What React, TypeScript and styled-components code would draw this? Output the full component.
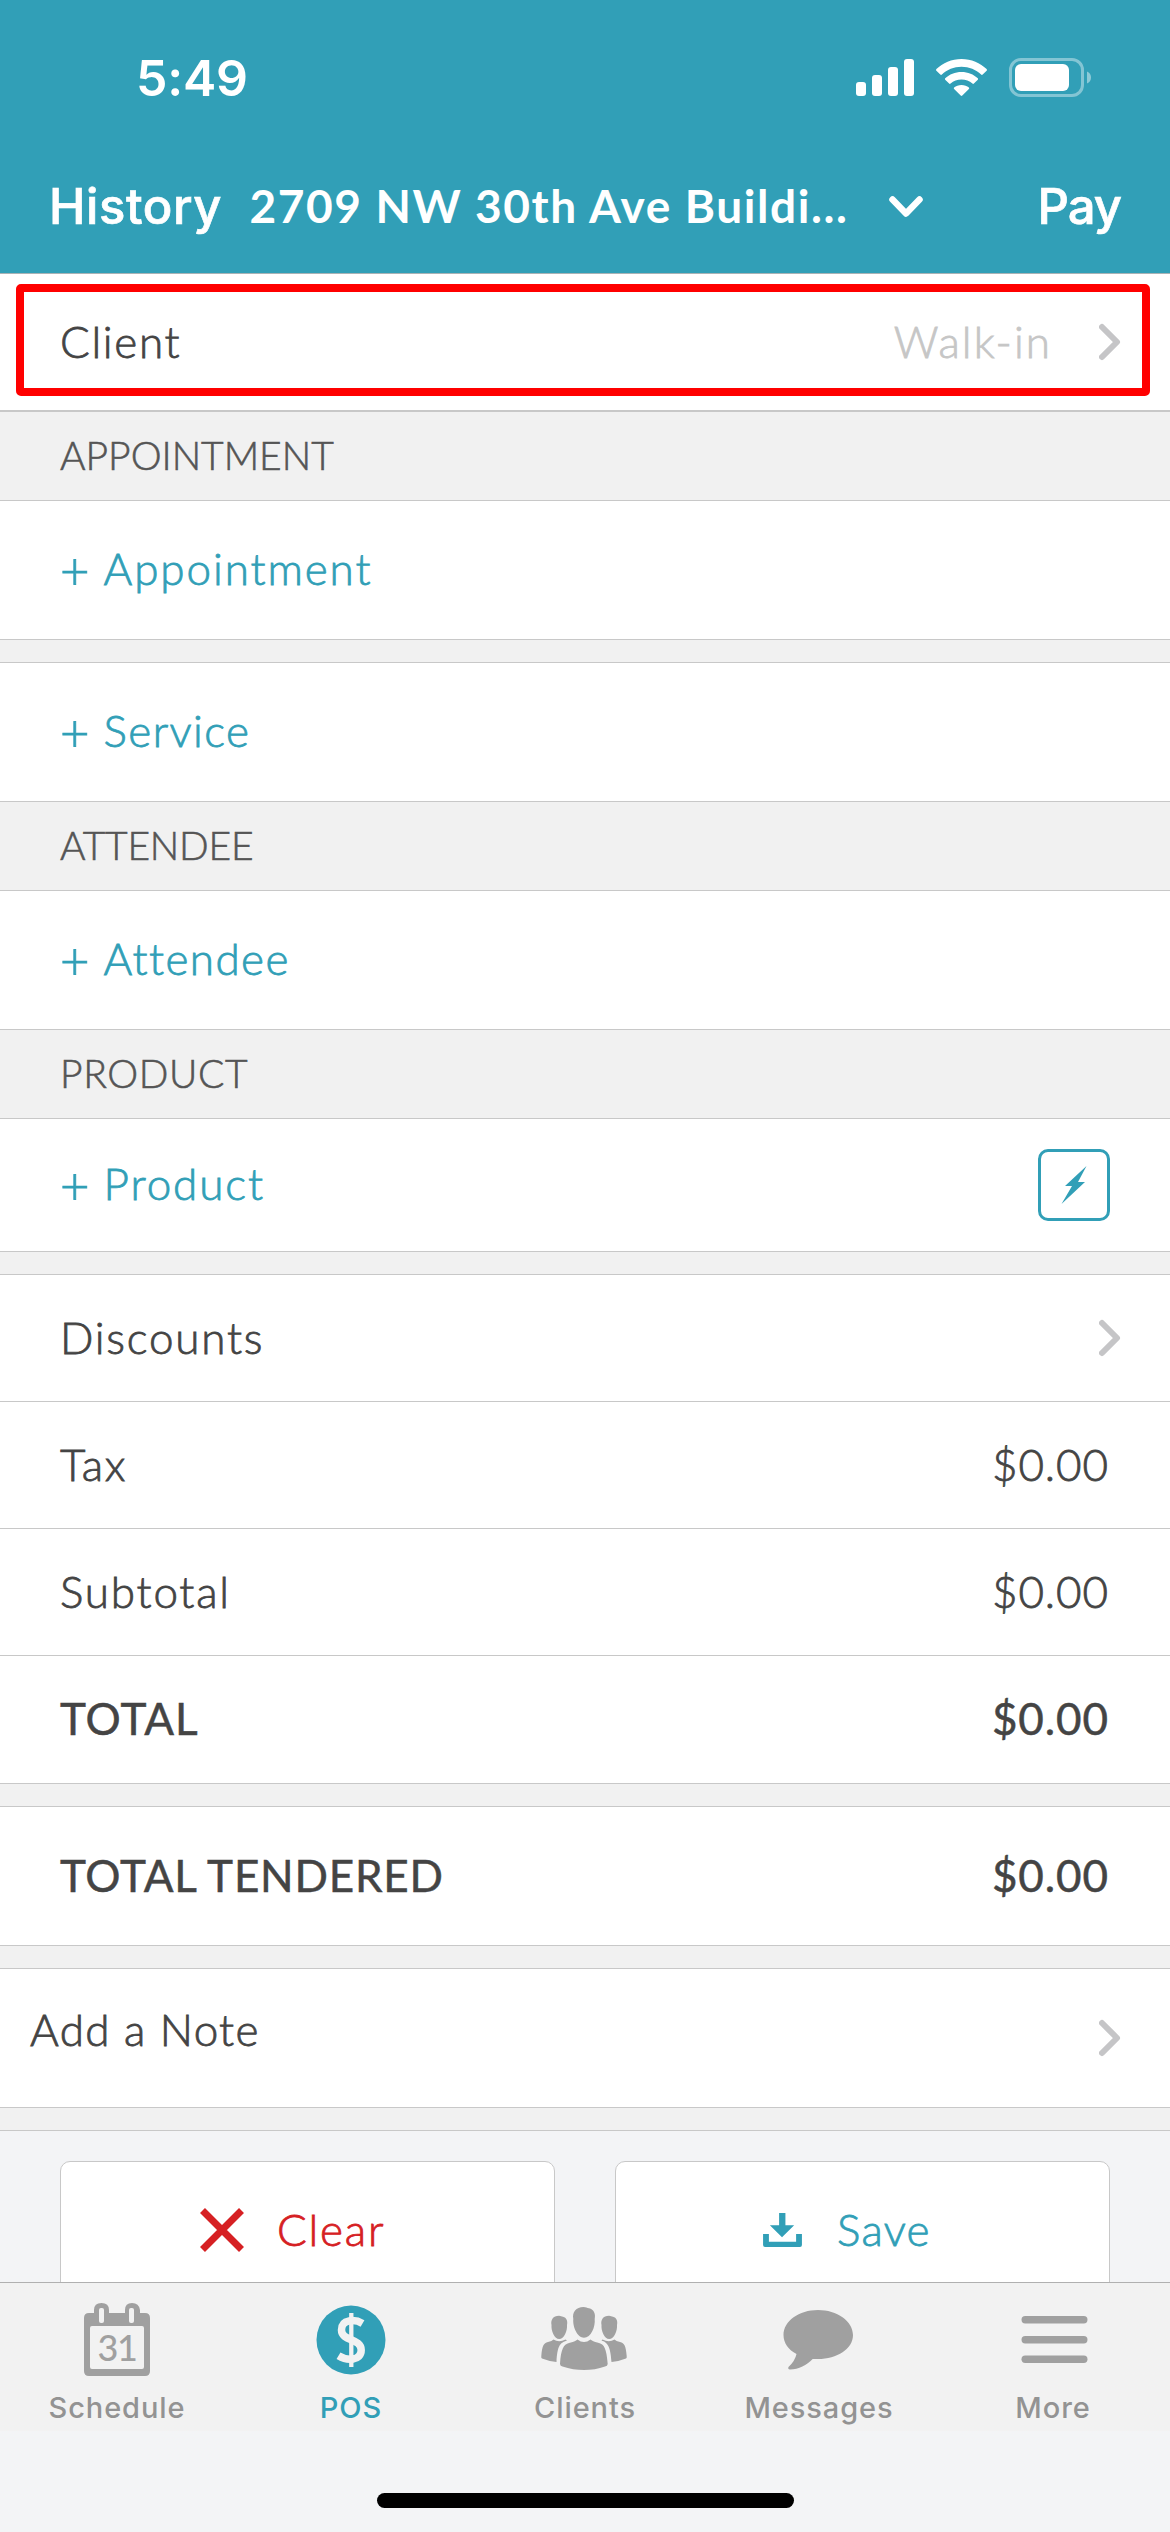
import React from "react";
import styled, { createGlobalStyle } from "styled-components";

const TEAL = "#319fb7";
const INK = "#444";
const LINE = "#c8c8c8";

const GlobalStyle = createGlobalStyle`
  *, *::before, *::after { box-sizing: border-box; }
  html, body { margin: 0; padding: 0; background: #f3f4f6; }
  body { width: 1170px; height: 2532px; overflow: hidden; }
`;

const Screen = styled.div`
  width: 1170px;
  height: 2532px;
  display: flex;
  flex-direction: column;
  background: #f3f4f6;
  font-family: Lato, "Open Sans", sans-serif;
  color: ${INK};
  overflow: hidden;
`;

const Header = styled.header`
  height: 274px;
  flex: none;
  display: flex;
  flex-direction: column;
  background: ${TEAL};
  border-bottom: 1px solid #a9b3b6;
  color: #fff;
`;

const StatusBar = styled.div`
  height: 140px;
  padding: 16px 78px 0 136px;
  display: flex;
  align-items: center;
  justify-content: space-between;
`;

const Clock = styled.span`
  font: 600 50px/60px Inter, sans-serif;
  letter-spacing: -0.2px;
`;

const StatusIcons = styled.div`
  display: flex;
  align-items: center;
  gap: 22px;
`;

const NavBar = styled.div`
  height: 133px;
  padding: 0 48px 0 49px;
  display: flex;
  align-items: center;
`;

const NavButton = styled.span<{ $ls: number }>`
  font: 500 49px/60px Inter, sans-serif;
  letter-spacing: ${(p) => p.$ls}px;
  margin-right: ${(p) => -p.$ls}px;
  -webkit-text-stroke: 0.7px #fff;
`;

const Location = styled.span`
  margin: -1px 0 0 28px;
  font-size: 46px;
  line-height: 60px;
  font-weight: 700;
  letter-spacing: 1.6px;
  white-space: nowrap;
`;

const Caret = styled.svg`
  margin-left: 40px;
  margin-right: auto;
`;

const List = styled.main`
  flex: none;
  display: flex;
  flex-direction: column;
`;

const Row = styled.div<{ $h: number; $line?: number; $left?: number; $right?: number; $up?: number }>`
  height: ${(p) => p.$h}px;
  padding: 0 ${(p) => p.$right ?? 62}px ${(p) => p.$up ?? 0}px ${(p) => p.$left ?? 60}px;
  display: flex;
  align-items: center;
  justify-content: space-between;
  background: #fff;
  border-bottom: ${(p) => p.$line ?? 1}px solid ${LINE};
`;

const Highlighted = styled(Row)`
  position: relative;
  &::after {
    content: "";
    position: absolute;
    left: 16px;
    top: 10px;
    width: 1134px;
    height: 112px;
    border: 8px solid #ff0000;
    border-radius: 5px;
  }
`;

const SectionTitle = styled.div<{ $ls?: number }>`
  height: 89px;
  padding: 0 60px 2px;
  display: flex;
  align-items: center;
  background: #f1f1f1;
  border-bottom: 1px solid ${LINE};
  font-size: 39px;
  font-weight: 300;
  letter-spacing: ${(p) => p.$ls ?? 0}px;
  color: #555;
  -webkit-text-stroke: 0.6px #555;
`;

const Spacer = styled.div`
  height: 23px;
  background: #f1f1f1;
  border-bottom: 1px solid ${LINE};
`;

const Label = styled.span<{ $ls?: number; $color?: string; $strong?: boolean }>`
  margin-top: -3px;
  margin-right: ${(p) => -(p.$ls ?? 0)}px;
  font-size: 44px;
  line-height: 56px;
  font-weight: ${(p) => (p.$strong ? 400 : 300)};
  font-variant-ligatures: none;
  letter-spacing: ${(p) => p.$ls ?? 0}px;
  color: ${(p) => p.$color ?? INK};
  -webkit-text-stroke: ${(p) => (p.$strong ? 0.5 : 0.8)}px ${(p) => p.$color ?? INK};
  white-space: nowrap;
`;

const LinkLabel = styled(Label)`
  display: flex;
  align-items: center;
  gap: 14px;
  margin-top: -4px;
`;

const Plus = styled.span`
  padding-top: 3px;
  font-size: 51px;
  line-height: 50px;
  letter-spacing: 0;
`;

const AddLink = ({ text, spacing }: { text: string; spacing: number }) => (
  <LinkLabel $color={TEAL} $ls={spacing}>
    <Plus>+</Plus>
    <span>{text}</span>
  </LinkLabel>
);

const Trailing = styled.div`
  display: flex;
  align-items: center;
  gap: 49px;
`;

const NoteChevron = styled.div`
  display: flex;
  padding-top: 14px;
`;

const QuickButton = styled.div`
  width: 72px;
  height: 72px;
  margin-right: -2px;
  display: grid;
  place-items: center;
  border: 3px solid ${TEAL};
  border-radius: 10px;
`;

const Actions = styled.div`
  height: 151px;
  padding: 30px 60px 0;
  display: flex;
  gap: 60px;
  overflow: hidden;
`;

const ActionCard = styled.div<{ $gap: number; $pad: number }>`
  flex: none;
  width: 495px;
  height: 150px;
  padding: 0 0 12px ${(p) => p.$pad}px;
  display: flex;
  align-items: center;
  gap: ${(p) => p.$gap}px;
  background: #fff;
  border: 1px solid ${LINE};
  border-radius: 10px;
`;

const TabBar = styled.nav`
  height: 149px;
  flex: none;
  display: grid;
  grid-template-columns: repeat(5, 1fr);
  background: #f2f2f2;
  border-top: 1px solid #b0b0b0;
`;

const Tab = styled.div<{ $active?: boolean }>`
  display: flex;
  flex-direction: column;
  align-items: center;
  color: ${(p) => (p.$active ? TEAL : "#939393")};
  font: 500 29px/36px Inter, sans-serif;
  letter-spacing: 0.9px;
  svg { flex: none; margin: 18px 0 13px; }
`;

const HomeArea = styled.div`
  flex: 1;
  padding-top: 62px;
  display: flex;
  justify-content: center;
`;

const HomeIndicator = styled.div`
  width: 417px;
  height: 15px;
  border-radius: 8px;
  background: #000;
`;

const Chevron = () => (
  <svg width="22" height="38" viewBox="0 0 22 38" fill="none">
    <path d="M3 4 L18 19 L3 34" stroke="#c5c5c7" strokeWidth="6" strokeLinecap="round" strokeLinejoin="round" />
  </svg>
);

const Signal = () => (
  <svg width="58" height="38" viewBox="0 0 58 38" fill="#fff">
    <rect x="0" y="23" width="10" height="14" rx="3" />
    <rect x="16" y="16" width="10" height="21" rx="3" />
    <rect x="32" y="8" width="10" height="29" rx="3" />
    <rect x="48" y="0" width="10" height="37" rx="3" />
  </svg>
);

const Wifi = () => (
  <svg width="51" height="38" viewBox="0 0 51 38" fill="#fff">
    <path d="M25.500 0 C35.300 0 44.300 3.900 50.600 10.100 Q51.300 10.900 50.600 11.700 L46.700 15.600 Q45.900 16.200 45.100 15.600 C40 10.800 33.100 7.800 25.500 7.800 S11 10.800 5.900 15.600 Q5.100 16.200 4.300 15.600 L.4 11.700 Q-.3 10.900 .4 10.100 C6.700 3.900 15.700 0 25.500 0Z" />
    <path d="M25.500 12.900 C31.900 12.900 37.600 15.300 41.800 19.300 Q42.500 20 41.800 20.700 L37.900 24.600 Q37.200 25.200 36.400 24.600 C33.500 22 29.700 20.500 25.500 20.500 S17.500 22 14.600 24.600 Q13.800 25.200 13.100 24.600 L9.200 20.700 Q8.500 20 9.200 19.300 C13.400 15.300 19.100 12.900 25.500 12.900Z" />
    <path d="M25.500 25.900 C28.400 25.900 31 26.900 32.900 28.500 Q33.600 29.200 32.900 29.900 L26.300 36.600 Q25.500 37.300 24.700 36.600 L18.100 29.900 Q17.400 29.200 18.100 28.500 C20 26.900 22.600 25.900 25.500 25.900Z" />
  </svg>
);

const Battery = () => (
  <svg width="83" height="40" viewBox="0 0 83 40">
    <rect x="1.500" y="1.500" width="72" height="36" rx="10.500" fill="none" stroke="#fff" strokeOpacity=".4" strokeWidth="3" />
    <rect x="6" y="6" width="54" height="27" rx="6" fill="#fff" />
    <path d="M78 13.500 C80.500 14.500 82 16.500 82 19.500 S80.500 24.500 78 25.500Z" fill="#fff" fillOpacity=".45" />
  </svg>
);

const App = () => (
  <Screen>
    <GlobalStyle />
    <Header>
      <StatusBar>
        <Clock>5:49</Clock>
        <StatusIcons>
          <Signal />
          <Wifi />
          <Battery />
        </StatusIcons>
      </StatusBar>
      <NavBar>
        <NavButton $ls={0.6}>History</NavButton>
        <Location>2709 NW 30th Ave Buildi...</Location>
        <Caret width="34" height="22" viewBox="0 0 34 22" fill="none">
          <path d="M3.500 3.500 L17 17.500 L30.500 3.500" stroke="#fff" strokeWidth="6.500" strokeLinecap="round" strokeLinejoin="round" />
        </Caret>
        <NavButton $ls={-1}>Pay</NavButton>
      </NavBar>
    </Header>

    <List>
      <Highlighted $h={138} $line={2} $right={49}>
        <Label $ls={1.7}>Client</Label>
        <Trailing>
          <Label $color="#c6c6c6" $ls={2.1}>Walk-in</Label>
          <Chevron />
        </Trailing>
      </Highlighted>
      <SectionTitle>APPOINTMENT</SectionTitle>
      <Row $h={139}><AddLink spacing={1.9} text="Appointment" /></Row>
      <Spacer />
      <Row $h={139}><AddLink spacing={1.4} text="Service" /></Row>
      <SectionTitle $ls={-0.2}>ATTENDEE</SectionTitle>
      <Row $h={139}><AddLink spacing={1.4} text="Attendee" /></Row>
      <SectionTitle $ls={0.6}>PRODUCT</SectionTitle>
      <Row $h={133}>
        <AddLink spacing={1.9} text="Product" />
        <QuickButton>
          <svg width="26" height="38" viewBox="0 0 26 38" fill={TEAL}>
            <path d="M25.500 0 L4 20 H11 L.5 38 L24 16 H17Z" />
          </svg>
        </QuickButton>
      </Row>
      <Spacer />
      <Row $h={127} $right={49}><Label $ls={1.8}>Discounts</Label><Chevron /></Row>
      <Row $h={127}><Label $ls={1.6}>Tax</Label><Label $ls={0.9}>$0.00</Label></Row>
      <Row $h={127}><Label $ls={1.8}>Subtotal</Label><Label $ls={0.9}>$0.00</Label></Row>
      <Row $h={128}><Label $strong $ls={1}>TOTAL</Label><Label $strong $ls={0.9}>$0.00</Label></Row>
      <Spacer />
      <Row $h={139}><Label $strong $ls={0.8}>TOTAL TENDERED</Label><Label $strong $ls={0.9}>$0.00</Label></Row>
      <Spacer />
      <Row $h={139} $left={30} $right={49} $up={15}>
        <Label $ls={1.3}>Add a Note</Label>
        <NoteChevron><Chevron /></NoteChevron>
      </Row>
      <Spacer />
      <Actions>
        <ActionCard $pad={138} $gap={32}>
          <svg width="46" height="46" viewBox="0 0 46 46" fill="none">
            <path d="M3.500 3.500 L42.500 42.500 M42.500 3.500 L3.500 42.500" stroke="#d62023" strokeWidth="7" />
          </svg>
          <Label $color="#d62023" $ls={1.8}>Clear</Label>
        </ActionCard>
        <ActionCard $pad={147} $gap={35}>
          <svg width="39" height="34" viewBox="0 0 40 35" fill={TEAL}>
            <path d="M16.500 0 H23 V12.500 H32 L19.500 25 L7 12.500 H16.500Z" />
            <path d="M0 21.500 H6 V29.500 H34 V21.500 H40 V33 Q40 35 38 35 H2 Q0 35 0 33Z" />
          </svg>
          <Label $color={TEAL} $ls={1.3}>Save</Label>
        </ActionCard>
      </Actions>
    </List>

    <TabBar>
      <Tab>
        <svg width="68" height="76" viewBox="0 0 68 76">
          <path fill="#a0a0a0" fillRule="evenodd" d="M6 12 H11 V9 Q11 2 18.500 2 T26 9 V12 H42 V9 Q42 2 49 2 T57 9 V12 H62 Q67 12 67 17 V70 Q67 75 62 75 H6 Q1 75 1 70 V17 Q1 12 6 12Z M9 25 Q7 25 7 27 V66 Q7 68 9 68 H59 Q61 68 61 66 V27 Q61 25 59 25Z" />
          <rect x="16" y="7" width="5" height="15" rx="2" fill="#f2f2f2" />
          <rect x="46" y="7" width="5" height="15" rx="2" fill="#f2f2f2" />
          <text x="34" y="59.500" textAnchor="middle" fontFamily="Lato" fontSize="36" letterSpacing="-1.5" fill="#a0a0a0">31</text>
        </svg>
        Schedule
      </Tab>
      <Tab $active>
        <svg width="70" height="76" viewBox="0 0 70 76">
          <circle cx="35" cy="39" r="34.500" fill={TEAL} />
          <g fill="none" stroke="#f2f2f2">
            <path d="M46.500 22.500 C39 18 25.500 18 25.500 29 C25.500 40.500 45.200 37 45.200 49 C45.200 60 31 60 22.500 54.800" strokeWidth="7.500" />
            <path d="M35.300 12 V66" strokeWidth="4.300" />
          </g>
        </svg>
        POS
      </Tab>
      <Tab>
        <svg width="88" height="76" viewBox="0 0 88 76" fill="#a0a0a0">
          <path d="M18 14.700 C20 14.700 20.500 15.500 22 15.700 C25.500 16.500 27 20 26 24 C26.500 30 23 38 18.200 38 C13.500 38 10 30 10.500 24 C9.500 19 12 14.700 18 14.700Z" />
          <path d="M68 14.700 C70 14.700 70.500 15.500 72 15.700 C75.500 16.500 77 20 76 24 C76.500 30 73 38 68.200 38 C63.500 38 60 30 60.500 24 C59.500 19 62 14.700 68 14.700Z" />
          <path d="M12.500 38.500 Q18 42 24.500 38.500 L26 39.500 C18.500 42 16.500 45 15.500 61 Q7 60 1 57.500 Q0 57 .3 55 C1.300 44 2.500 42.500 7 41 Q11 40 12.500 38.500Z" />
          <path d="M73.500 38.500 Q68 42 61.500 38.500 L60.500 39.500 C66.500 41.500 69.500 45 70.500 61 Q79 60 85 57.500 Q86 57 85.700 55 C84.700 44 83.500 42.500 79 41 Q75 40 73.500 38.500Z" />
          <path d="M42.500 6 C45 6 46 7 48 7.300 C53 8.500 54.800 13 53.700 18 C54.500 26 50 36.700 43 36.700 C36.500 36.700 31.500 26 32.300 18 C31 11 35 6 42.500 6Z" />
          <path d="M36.500 38.500 Q43 43.500 49.500 38.500 Q52 40.500 58 42 C63.500 43.500 65.500 48 66.700 63 Q66.500 65 64 65.500 Q54 69 43 69 T21.500 65.500 Q19.200 65 19 63 C20 48 22.500 43.500 28 42 Q34 40.500 36.500 38.500Z" />
        </svg>
        Clients
      </Tab>
      <Tab>
        <svg width="72" height="76" viewBox="0 0 72 76" fill="#a0a0a0">
          <path d="M35 9 C54 9 70 20 70 34 S54 58 35 58 L29.700 58 C23.500 64 16 68.500 7 68.500 Q4.500 68 5.500 66 Q12 60 13.500 53 C5.500 49 .5 42 .5 34 C.5 20 16 9 35 9Z" />
        </svg>
        Messages
      </Tab>
      <Tab>
        <svg width="70" height="76" viewBox="0 0 70 76" fill="#a0a0a0">
          <rect x="3.500" y="15" width="66" height="7.500" rx="3.700" />
          <rect x="3.500" y="35" width="66" height="7.500" rx="3.700" />
          <rect x="3.500" y="54.500" width="66" height="7.500" rx="3.700" />
        </svg>
        More
      </Tab>
    </TabBar>
    <HomeArea>
      <HomeIndicator />
    </HomeArea>
  </Screen>
);

export default App;
